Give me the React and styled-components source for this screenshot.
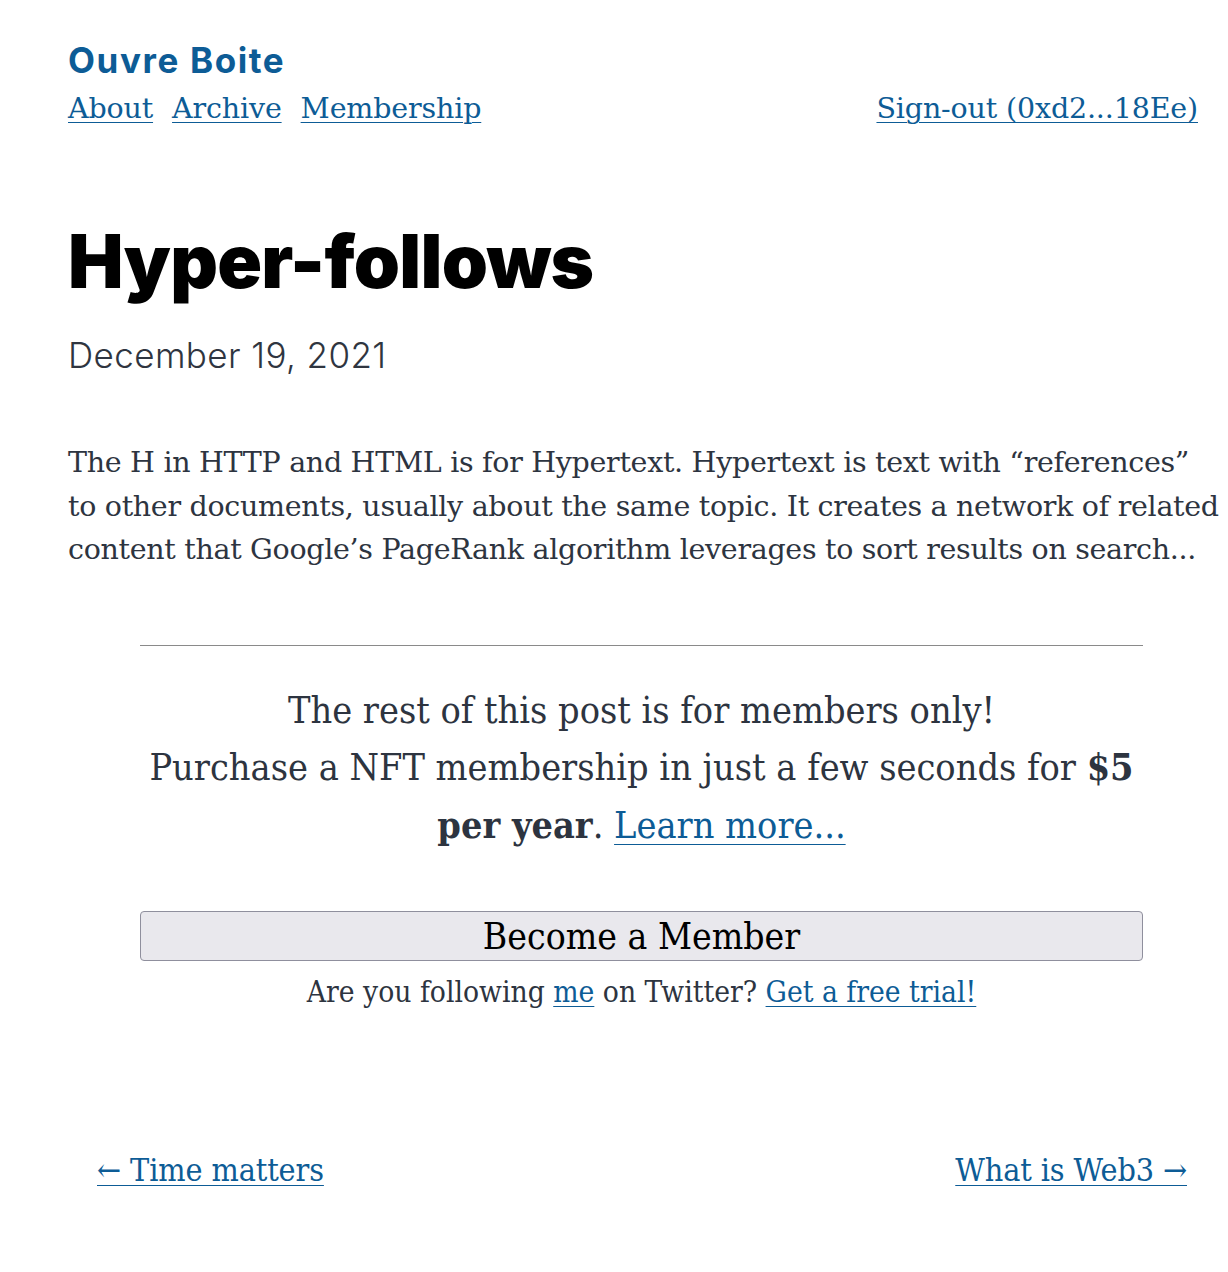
import React from "react";
import styled, { createGlobalStyle } from "styled-components";

const Global = createGlobalStyle`
  html, body { margin: 0; padding: 0; background: #fff; }
  body { font-family: "DejaVu Serif", serif; color: #2d3440; }
`;

const BLUE = "#0d5c96";

const Page = styled.div`
  width: 1228px;
  box-sizing: border-box;
  padding: 37px 30px 60px 68px;
`;

const SiteTitle = styled.a`
  display: block;
  font-family: "Inter", "Noto Sans", sans-serif;
  font-weight: 700;
  font-size: 35px;
  line-height: 46px;
  color: ${BLUE};
  text-decoration: none;
  letter-spacing: 1.6px;
`;

const NavRow = styled.nav`
  display: flex;
  justify-content: space-between;
  align-items: baseline;
  margin-top: 6px;
`;

const NavList = styled.div`
  display: flex;
  gap: 19px;
`;

const Link = styled.a`
  color: ${BLUE};
  text-decoration: underline;
  text-decoration-thickness: 1px;
  text-underline-offset: 4px;
  cursor: pointer;
`;

const NavLink = styled(Link)`
  font-family: "DejaVu Serif", serif;
  font-size: 28.5px;
  line-height: 40px;
  letter-spacing: -0.15px;
`;

const Title = styled.h1`
  margin: 88px 0 0;
  font-family: "Inter", "Noto Sans", sans-serif;
  font-weight: 900;
  font-size: 74px;
  line-height: 88px;
  letter-spacing: -0.75px;
  color: #000;
`;

const DateLine = styled.div`
  margin-top: 27px;
  font-family: "Inter", "Noto Sans", sans-serif;
  font-weight: 300;
  font-size: 35px;
  line-height: 46px;
  letter-spacing: 0.4px;
  color: #2f3540;
`;

const Excerpt = styled.p`
  margin: 63px 0 0;
  font-size: 28.5px;
  line-height: 43.5px;
  letter-spacing: -0.3px;
  white-space: nowrap;
  color: #2d3440;
`;

const Paywall = styled.section`
  width: 1003px;
  margin: 73px 0 0 72px;
  display: flex;
  flex-direction: column;
  align-items: center;
  text-align: center;
`;

const Rule = styled.hr`
  width: 100%;
  margin: 0;
  border: none;
  border-top: 1px solid #8a8a8a;
`;

const Pitch = styled.p`
  margin: 36px 0 0;
  font-family: "DejaVu Serif Condensed", "DejaVu Serif", serif;
  font-stretch: condensed;
  font-size: 37.5px;
  line-height: 57.5px;
  color: #2d3440;
`;

const Strong = styled.strong`
  font-weight: 700;
`;

const PitchLink = styled(Link)`
  text-underline-offset: 6px;
`;

const MemberButton = styled.button`
  width: 100%;
  height: 50px;
  margin-top: 57px;
  box-sizing: border-box;
  background: #e9e8ed;
  border: 1px solid #8f8f9d;
  border-radius: 4px;
  font-family: "DejaVu Serif Condensed", "DejaVu Serif", serif;
  font-stretch: condensed;
  font-size: 37px;
  color: #000;
  padding: 0;
  cursor: pointer;
`;

const Trial = styled.p`
  margin: 11px 0 0;
  font-family: "DejaVu Serif Condensed", "DejaVu Serif", serif;
  font-stretch: condensed;
  font-size: 29.7px;
  line-height: 40px;
  color: #2d3440;
`;

const PostNav = styled.nav`
  display: flex;
  justify-content: space-between;
  margin: 138px 11px 0 29px;
`;

const PostLink = styled(Link)`
  font-family: "DejaVu Serif Condensed", "DejaVu Serif", serif;
  font-stretch: condensed;
  font-size: 32px;
  line-height: 40px;
  letter-spacing: -0.1px;
`;

export default function App() {
  return (
    <>
      <Global />
      <Page>
        <header>
          <SiteTitle>Ouvre Boite</SiteTitle>
          <NavRow>
            <NavList>
              <NavLink>About</NavLink>
              <NavLink>Archive</NavLink>
              <NavLink>Membership</NavLink>
            </NavList>
            <NavLink>Sign-out (0xd2...18Ee)</NavLink>
          </NavRow>
        </header>
        <main>
          <Title>Hyper-follows</Title>
          <DateLine>December 19, 2021</DateLine>
          <Excerpt>
            The H in HTTP and HTML is for Hypertext. Hypertext is text with “references”
            <br />
            to other documents, usually about the same topic. It creates a network of related
            <br />
            content that Google’s PageRank algorithm leverages to sort results on search...
          </Excerpt>
          <Paywall>
            <Rule />
            <Pitch>
              The rest of this post is for members only!
              <br />
              Purchase a NFT membership in just a few seconds for <Strong>$5</Strong>
              <br />
              <Strong>per year</Strong>. <PitchLink>Learn more...</PitchLink>
            </Pitch>
            <MemberButton>Become a Member</MemberButton>
            <Trial>
              Are you following <Link>me</Link> on Twitter? <Link>Get a free trial!</Link>
            </Trial>
          </Paywall>
          <PostNav>
            <PostLink>← Time matters</PostLink>
            <PostLink>What is Web3 →</PostLink>
          </PostNav>
        </main>
      </Page>
    </>
  );
}
